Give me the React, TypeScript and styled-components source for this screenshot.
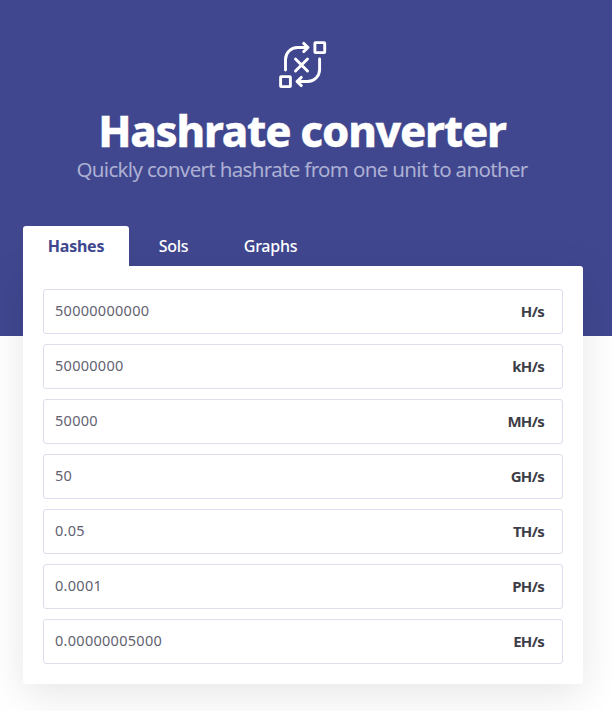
import React, { useState } from "react";
import styled, { createGlobalStyle } from "styled-components";

const GlobalStyle = createGlobalStyle`
  * { box-sizing: border-box; }
  body {
    margin: 0;
    background: #fff;
    font-family: "Noto Sans", "Open Sans", sans-serif;
    overflow: hidden;
  }
`;

const Page = styled.main`
  height: 711px;
  padding: 40px 29px 0 23px;
  background: linear-gradient(#40478f 336px, #fff 336px);
`;

const Header = styled.header`
  display: flex;
  flex-direction: column;
  align-items: center;
  height: 186px;
  white-space: nowrap;
`;

const Icon = styled.svg`
  display: block;
  flex: none;
  width: 50px;
  height: 50px;
  fill: none;
  stroke: #fff;
  stroke-width: 2.9;
  stroke-linecap: round;
  stroke-linejoin: round;
`;

const Title = styled.h1`
  margin: 17px 2px 0 0;
  color: #fff;
  font-size: 43.5px;
  font-weight: 800;
  line-height: 46px;
  letter-spacing: -1.25px;
  -webkit-text-stroke: 0.3px #fff;
`;

const Subtitle = styled.p`
  margin: 4px 2px 0 0;
  color: #adb0d3;
  font-size: 20.5px;
  line-height: 24px;
  letter-spacing: -0.66px;
`;

const Tabs = styled.nav`
  display: flex;
  height: 40px;
`;

const Tab = styled.button<{ $active: boolean; $width: number }>`
  width: ${(p) => p.$width}px;
  padding: 0;
  border: 0;
  border-radius: 3px 3px 0 0;
  background: ${(p) => (p.$active ? "#fff" : "transparent")};
  color: ${(p) => (p.$active ? "#40478f" : "#fff")};
  font: ${(p) => (p.$active ? 700 : 500)} 16px/40px "Noto Sans", sans-serif;
  letter-spacing: -0.25px;
  cursor: pointer;
`;

const Card = styled.section`
  display: flex;
  flex-direction: column;
  gap: 10px;
  width: 560px;
  height: 418px;
  padding: 23px 20px 20px;
  border-radius: 0 3px 3px 3px;
  background: #fff;
  box-shadow: 0 10px 40px rgba(0, 0, 0, 0.1);
`;

const Field = styled.label`
  display: flex;
  align-items: center;
  height: 45px;
  padding: 0 18px 2px 11px;
  border: 1px solid #dddded;
  border-radius: 3px;
`;

const Value = styled.input`
  flex: 1;
  min-width: 0;
  padding: 0 0 2px;
  border: 0;
  outline: 0;
  background: transparent;
  color: #62626f;
  font: 400 14.5px/20px "Noto Sans", sans-serif;
  letter-spacing: 0.28px;
`;

const Unit = styled.span`
  color: #3d3d48;
  font-size: 15px;
  font-weight: 700;
  line-height: 20px;
  letter-spacing: -0.7px;
`;

const tabs = [
  { name: "Hashes", width: 106 },
  { name: "Sols", width: 89 },
  { name: "Graphs", width: 105 },
];

const initialRates = [
  ["50000000000", "H/s"],
  ["50000000", "kH/s"],
  ["50000", "MH/s"],
  ["50", "GH/s"],
  ["0.05", "TH/s"],
  ["0.0001", "PH/s"],
  ["0.00000005000", "EH/s"],
];

export default function App() {
  const [active, setActive] = useState("Hashes");
  return (
    <>
      <GlobalStyle />
      <Page>
        <Header>
          <Icon viewBox="0 0 50 50" aria-hidden="true">
            <rect x="36.9" y="2.6" width="9.8" height="10" rx="0.6" />
            <rect x="2.6" y="36.6" width="9.8" height="10" rx="0.6" />
            <path d="M7.5 30V19.5A12 12 0 0 1 19.5 7.5H30M25.7 3.4L30 7.5L25.7 11.6" />
            <path d="M41.6 19V29.5A12 12 0 0 1 29.6 41.5H19.5M23.3 37.4L19 41.5L23.3 45.6" />
            <path d="M17.5 19L29.5 31M29.5 19L17.5 31" />
          </Icon>
          <Title>Hashrate converter</Title>
          <Subtitle>Quickly convert hashrate from one unit to another</Subtitle>
        </Header>
        <Tabs>
          {tabs.map((t) => (
            <Tab
              key={t.name}
              $active={active === t.name}
              $width={t.width}
              onClick={() => setActive(t.name)}
            >
              {t.name}
            </Tab>
          ))}
        </Tabs>
        <Card>
          {initialRates.map(([value, unit]) => (
            <Field key={unit}>
              <Value defaultValue={value} />
              <Unit>{unit}</Unit>
            </Field>
          ))}
        </Card>
      </Page>
    </>
  );
}
